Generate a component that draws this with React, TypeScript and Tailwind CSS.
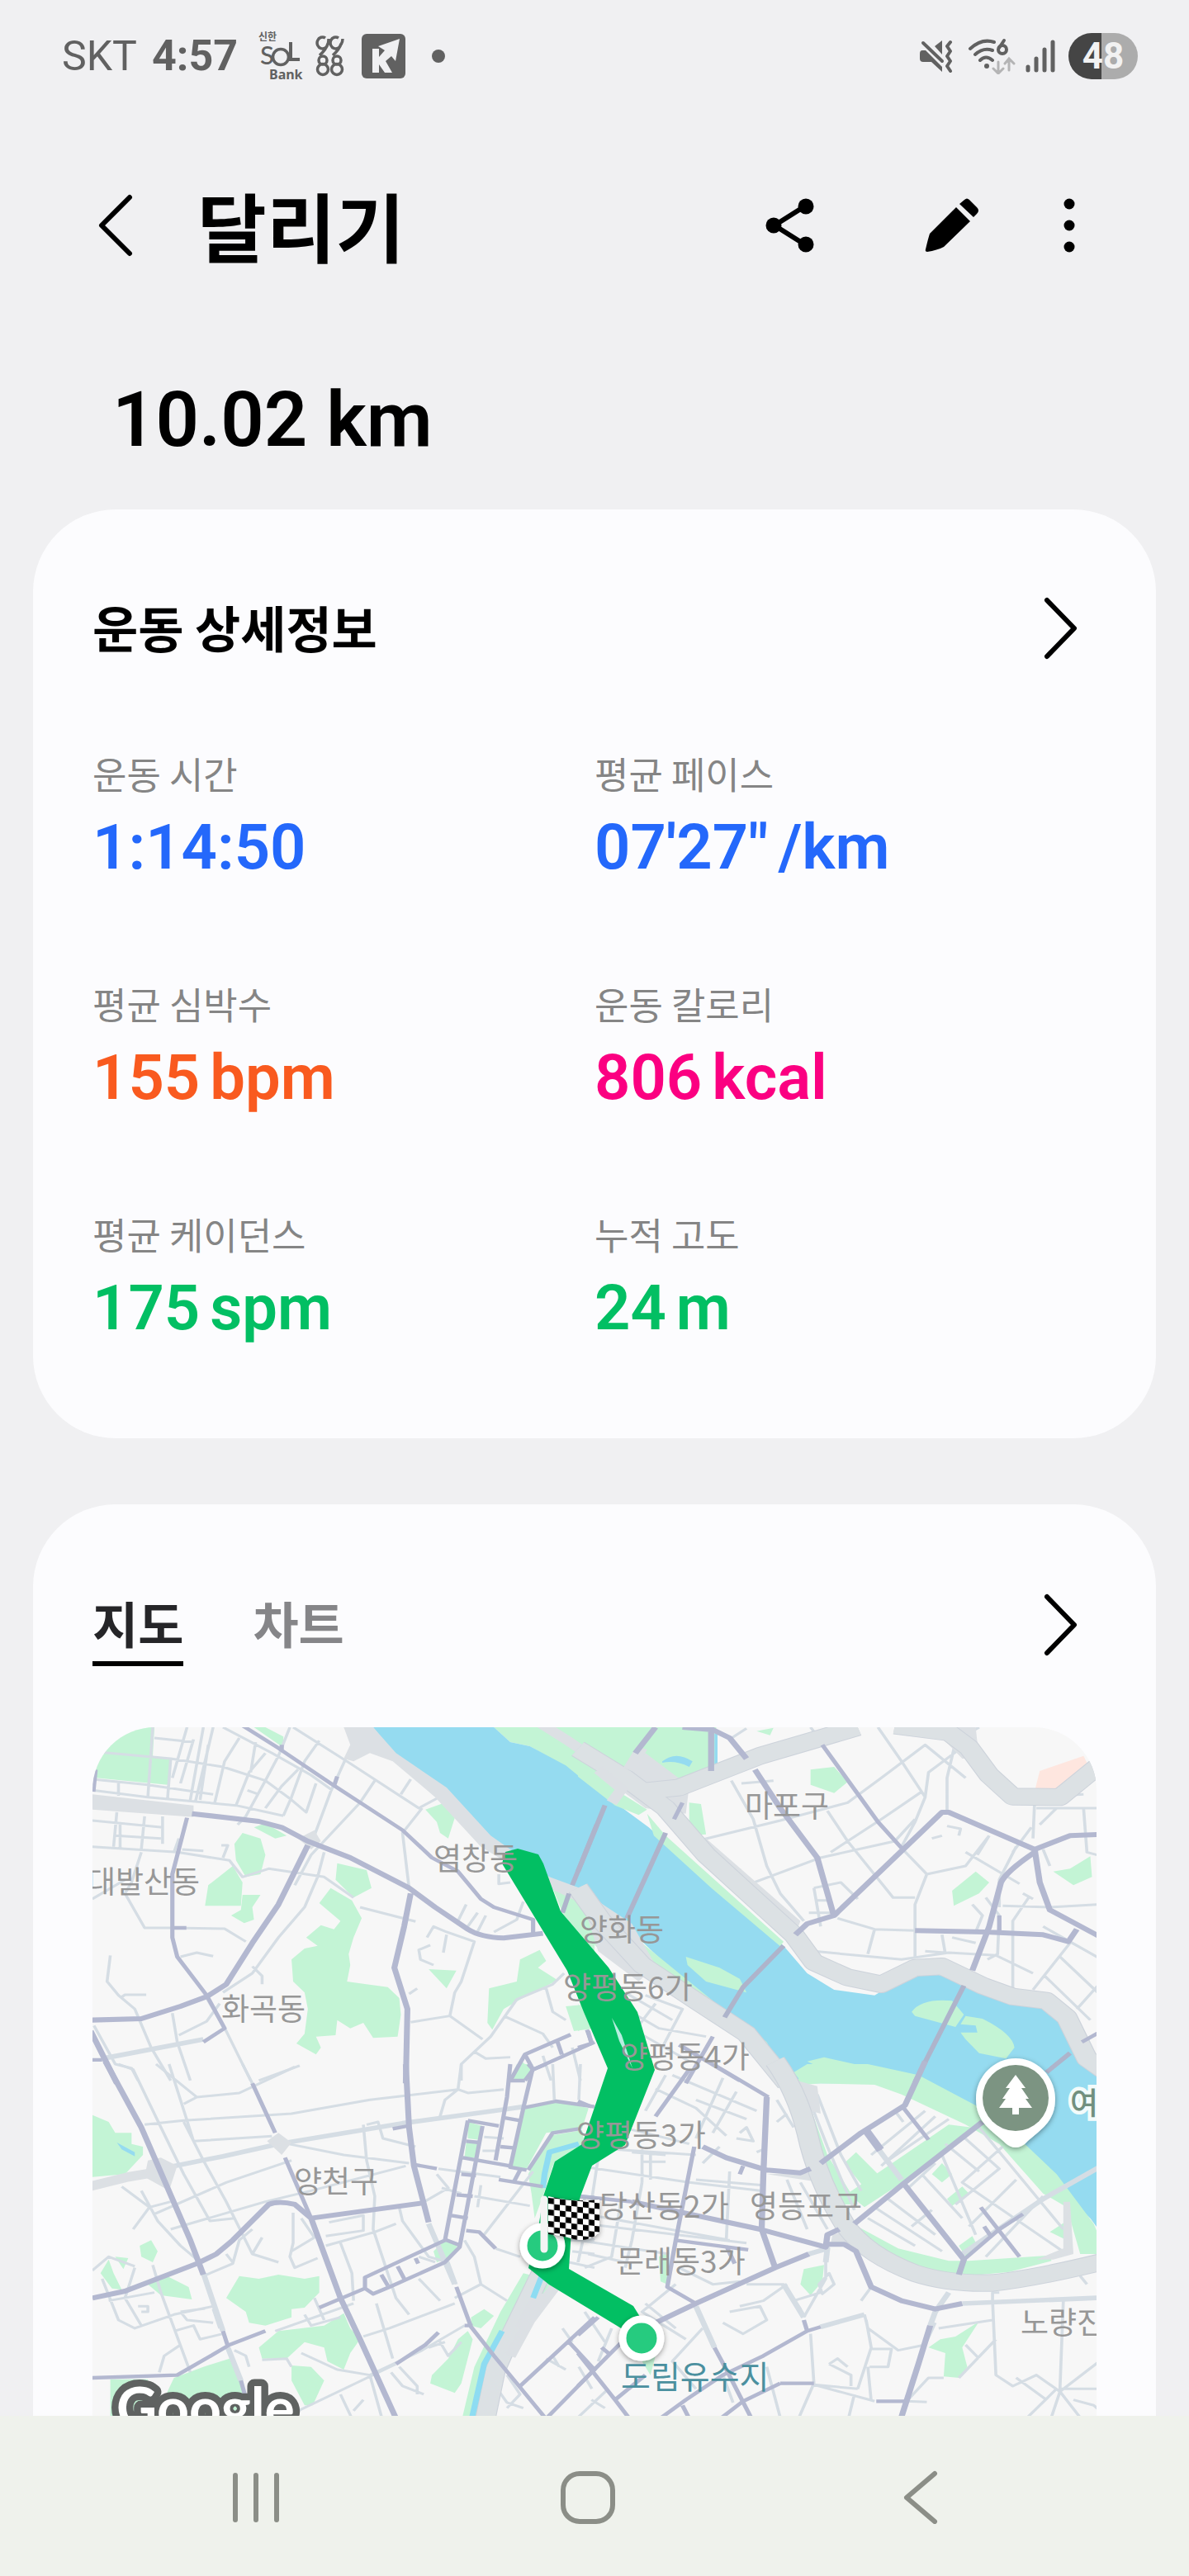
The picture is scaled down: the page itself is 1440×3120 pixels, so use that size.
import React, { useState } from 'react';

interface Stat {
    label: string;
    value: string;
    unit?: string;
    color: string;
}

interface Tile {
    id: string;
    transform: string;
    green: string;
    water: string;
    waterLand?: string;
    blush?: string;
    highwayFill: string;
    highway?: string;
    highwayThin?: string;
    stream?: string;
    streets: string;
    wide?: string;
    roads: string;
    main: string;
    bridges?: string;
}

interface Place {
    name: string;
    x: number;
    y: number;
}

const stats: Stat[] = [
    { label: '운동 시간', value: '1:14:50', color: 'text-[#2468fb]' },
    { label: '평균 페이스', value: '07\'27"', unit: '/km', color: 'text-[#2468fb]' },
    { label: '평균 심박수', value: '155', unit: 'bpm', color: 'text-[#f95a1f]' },
    { label: '운동 칼로리', value: '806', unit: 'kcal', color: 'text-[#fb0081]' },
    { label: '평균 케이던스', value: '175', unit: 'spm', color: 'text-[#02bf63]' },
    { label: '누적 고도', value: '24', unit: 'm', color: 'text-[#02bf63]' },
];

// Each tile is drawn in its own 1568 x 1320 space and scaled onto the map.
const tiles: Tile[] = [
    {
        id: 'nw',
        transform: 'translate(-12 -12) scale(0.3954 0.3333)',
        green: 'M30 36H220L215 140L270 150L260 245L40 220Z M525 36H560L615 70V110Z M525 400L560 385L625 430L590 440Z M490 420L545 440L560 500L545 570L500 580L470 520L465 460Z M460 540L490 600L485 685H375L385 610Z M490 645H545L520 690L525 735L495 748L455 720L485 700Z M780 530L870 555L885 620L830 655L775 590Z M760 620L825 665L855 730L830 800L815 860L820 900L810 960L860 968L935 980L970 1020L975 1080L965 1160L890 1165L860 1110L820 1130L780 1100L775 1155L715 1160L730 1200L715 1225L655 1185L680 1150L690 1060L680 1000L645 960L640 880L680 840L720 830L685 800L730 755L770 770L790 740L725 675Z M1050 335L1110 310L1140 365L1120 440L1095 420L1085 380Z M1060 915L1145 920L1115 985Z M1340 880L1400 845L1420 885L1395 910L1455 955L1340 1025L1290 1060L1255 1135L1240 1110L1245 985L1330 960Z M1480 1050L1568 1040V1130L1505 1140Z M1260 36H1568V270L1480 180L1370 105L1310 90Z M1440 620L1568 700V870L1470 710Z M1320 1320L1340 1245L1375 1280L1355 1320Z',
        water: 'M890 36H1260L1310 90L1370 105L1480 175L1568 260V660L1430 600L1250 450L1100 260L960 140Z',
        highwayFill: 'M800 36H890L960 130L1115 255L1250 430L1430 580L1568 640V700L1430 620L1220 470L1080 290L950 160L880 130L830 160L800 150L820 100Z M30 280L340 320V362L30 335Z M660 440L710 410L730 450L700 480Z',
        highwayThin: 'M1400 20L1480 80L1580 160',
        streets: 'M40 125L270 150L430 180L560 230L640 300L685 345L715 240 M215 36L200 290 M270 150L260 300 M220 75L340 90 M320 36L275 220 M370 36L330 300 M400 36L345 310 M340 80L300 240 M385 100L360 300 M430 36L580 130L700 210L765 265 M480 75L435 160L405 310 M560 130L510 200L470 320 M635 36L600 140L560 230L500 360L475 390 M660 190L610 250L560 330 M725 85L680 160L640 290L615 358 M30 225L200 245L400 280 M30 265L200 290L470 320L615 358 M110 235V285 M645 36L810 160L1030 330L1085 295 M810 140L760 270L710 430 M895 230L850 310L700 500L650 610 M1005 225L975 280 M1040 330L980 420L1000 620 M30 375L245 400 M105 345L95 470 M115 380V475 M190 360L180 480 M245 360V460 M295 440L280 490 M30 470L290 490L450 520L490 580L570 550L740 580L830 655 M100 430L240 440 M180 490L150 600L130 640L190 765H275L435 768L500 815 M305 480L370 485 M425 465H445L430 510 M740 490L720 580L680 690L600 800L520 930L430 1000 M130 590L30 660 M85 865L75 960L110 1010L160 1060L210 1200L270 1320 M195 1008H130L115 1020 M275 1075L290 1180L330 1320 M35 1120L100 1260L150 1275L170 1320 M380 1020L440 1140L515 1320 M665 1266L540 1320 M295 1155L380 1105L420 1040 M300 870L350 855L400 868 M520 905L550 940V970 M850 690L1020 742 M1055 800L1075 760L1115 780L1200 815L1160 960L1140 1000L1125 1085L1225 1170 M1115 790L1105 855 M1065 828L1030 845L1035 880L1075 900 M1005 1108L1125 1085 M1000 1005L1025 985 M1475 930L1440 970L1330 1025L1250 1160L1160 1260V1320 M1420 985L1440 1070L1480 1100 M1290 1085L1410 1150L1440 1200 M1200 1215L1235 1240L1310 1235 M1175 680L1150 740 M1210 710L1180 760 M1235 720L1205 790 M1350 670L1330 735L1260 780 M1275 570V605L1310 600 M1500 1200L1525 1320 M1410 1230L1435 1320 M505 265L540 280 M515 200L530 90',
        wide: 'M70 1238L370 1170',
        roads: 'M320 365L275 570V800L290 870L380 1010L435 1130L370 1180 M30 1245H60 M1495 1153L1355 1225L1310 1320 M1568 1180L1380 1280 M1355 1225L1380 1280L1355 1320 M1545 1135L1560 1185 M1455 1180L1468 1225 M780 215L770 250 M490 30L600 112L760 240L980 410L1070 510L1150 560L1220 660L1260 690L1380 735V790 M610 100V120 M280 765H318 M40 190L33 270',
        main: 'M335 350L540 378L610 400L690 450L820 510L1000 620L1080 690L1180 770Q1220 800 1290 802L1410 785 M30 1100L180 1095L300 1050L380 1015L440 970L520 820L600 680L690 465 M1005 640L985 760L955 910L995 1060L990 1330 M25 1140L105 1330',
        bridges: 'M1575 390L1500 610 M1490 640L1470 710',
    },
    {
        id: 'ne',
        transform: 'translate(588 -12) scale(0.4082 0.3333)',
        green: 'M0 36H410V190L330 230L250 275H190L130 190L0 90Z M690 190L760 180L800 235L760 275L690 245Z M330 310L365 315L380 425L330 430Z M530 50L580 38L570 65Z M1110 630L1180 560L1220 600L1190 640L1115 685Z M1410 560L1460 550L1520 505L1525 580L1470 610Z M0 1040L20 1130L0 1140Z M0 670L60 740L70 850L0 770Z',
        water: 'M0 205L100 300L210 400L440 650L610 830L680 930L760 990L880 1010L960 950L1050 930L1150 960L1290 1030L1380 1050L1440 1120L1510 1290L1568 1330H640L560 1200L350 1000L160 780L20 620L0 560Z M250 160Q290 120 340 160L330 180Q290 155 250 165Z M405 60H414V190H405Z',
        waterLand: 'M0 130L120 270L205 335L180 355L110 320L0 215Z M205 350L260 430L610 815L600 832L400 625L225 430Z M170 800L400 1030L560 1180L590 1250L520 1180L340 1010L210 900Z M320 870L420 910L480 950L500 1000L380 960L325 900Z M990 1070Q1020 1020 1110 1030L1145 1080L1120 1125L1000 1085Z M1150 1085L1200 1095Q1290 1150 1295 1200L1270 1240L1190 1220L1150 1170L1135 1145L1185 1145L1180 1120L1135 1115Z M680 1250L730 1235L1000 1310L1020 1330H640L665 1300L690 1310L730 1280Z',
        blush: 'M1370 195L1500 140L1510 165L1425 268H1355Z',
        highwayFill: 'M0 620L160 750L230 900L180 960L60 850Z M100 240L200 130L330 250L320 350L200 330Z M1050 36H1180L1190 150L1140 150Z M330 440L380 440L660 740L640 800L550 690Z',
        highway: 'M0 115L140 220L260 330L380 500L550 690L640 790L700 890L800 945L900 970L1000 910L1080 905L1200 975L1290 1015L1390 1030L1450 1090L1510 1240L1568 1290 M0 620L70 740L190 900L350 1030L500 1150L620 1330 M180 270L300 255L540 140L830 36 M940 30L1100 55L1160 110L1220 210L1290 288L1430 290L1540 180',
        highwayThin: 'M60 190L130 260L100 310 M150 190L190 110',
        streets: 'M455 230L520 370L560 540L600 640L670 740 M350 450L600 375L800 310L900 220L1030 100L1150 220 M890 36L960 160L1030 290L1000 380L960 470 M1160 90L1040 200L1030 290 M1120 90L1095 220V340 M750 490L900 370L1020 270 M500 610L720 510L940 450L1000 370 M740 340L800 450L935 655H1000 M960 475L1035 570L1150 540L1220 430 M1035 570L1000 680V880 M1150 490L1310 605 M1185 500L1220 430 M700 620L780 600L830 660 M700 620L720 760 M710 665H740 M685 710H760 M770 730L880 770L1000 775 M880 770L860 860 M700 850L960 880L1100 855L1240 865L1350 930 M1350 440L1355 300 M1260 685L1400 690L1540 680 M1340 650L1290 740V990 M1350 990L1460 820 M1380 760L1568 890 M1430 870L1568 1030 M1385 940L1520 1100 M1480 1060L1568 940 M1500 330L1510 490L1540 500 M1360 330H1568 M1350 290L1500 280 M1370 390L1420 330 M485 240L580 230 M1080 790L1090 860 M1110 800L1180 820 M1030 850L1090 855 M1170 680L1200 720L1180 780 M1210 655L1250 720L1245 860L1215 880 M480 550L470 580L650 740 M350 460L490 620L630 740 M200 1010L310 1060L250 1200 M170 1080L240 1130L380 1160 M230 1040L180 1120 M140 1000L280 1100 M90 1100L200 1160L330 1250 M1050 440L1080 430 M1095 395L1135 405L1130 430 M1320 640L1350 660 M1300 470L1250 590V690 M1345 400L1290 490 M1380 480L1400 540 M450 80L500 40 M690 36L705 60 M1150 65L1190 36',
        roads: 'M725 100L890 380L960 475 M285 370L310 310 M1495 1180L1568 1130 M400 1160L320 1330 M300 1190L480 1320 M0 1200L40 1185L30 1140 M1250 720V780',
        main: 'M170 130L230 36 M395 36V195 M310 36L400 45L450 75L500 150 M525 190L600 330L710 510L760 725 M645 790L680 750L760 720L1080 345H1100L1355 480L1460 430L1568 425 M1355 490Q1270 560 1255 600L1220 760L1170 920 M1000 775L1210 780L1380 790L1455 815L1480 770 M1355 480L1370 600L1400 700L1568 810',
        bridges: 'M0 560L80 320 M145 730L260 420 M435 1090L490 980L610 830 M1000 1325L1145 975 M1390 1290L1460 1220',
    },
    {
        id: 'sw',
        transform: 'translate(-12 408) scale(0.3954 0.3333)',
        green: 'M30 185L80 210L100 250H150V290L185 300V330L130 400L30 410Z M175 660L210 640L230 680L215 720L180 700Z M55 760L80 710L95 760L120 820L90 815Z M100 700L140 705L125 745Z M200 800L250 765L325 810L335 855L240 840Z M440 850L480 770L540 780L600 765L680 780L725 770V830L680 885L640 890V920L560 950L510 940L500 900Z M540 1030L600 970L740 950L800 905L820 960L850 1000L820 1050L800 1110L750 1080L740 1030L680 1010L625 1070L550 1070Z M640 1095L700 1100L740 1150L705 1240H680L640 1150Z M240 1240L280 1140L370 1100L450 1070L490 1160L500 1300H240Z M85 1145H200V1300H85Z M1180 210L1225 225L1215 275L1180 270Z M1175 285L1210 290L1205 340H1170Z M1330 0H1380L1350 55H1310Z M1350 165L1450 135L1550 160L1530 235L1420 250L1360 380H1315Z M1365 400L1430 260L1530 240L1540 300L1440 370L1410 480L1385 560L1375 470Z M1075 680L1110 640L1150 655L1130 700L1085 720Z M1190 920L1230 890L1260 915L1220 960L1190 950Z M1180 970L1195 1000L1160 1160L1140 1195L1065 1160L1070 1130L1120 1070L1150 1000Z M1350 760L1280 900L1200 1100L1160 1300H1230L1300 1080L1360 960L1450 790Z',
        water: 'M105 285L160 320V335L120 310Z',
        highwayFill: 'M565 280L600 250L640 285L610 330Z M200 350L240 340L290 370L265 460L190 410Z',
        highway: 'M1405 760L1310 990L1265 1110L1230 1310',
        highwayThin: 'M20 445L140 410L240 390 M1465 780L1370 930L1310 1060 M1340 960L1400 830',
        stream: 'M1285 970L1230 1090L1188 1310 M1410 760L1380 850 M1520 290L1430 320L1415 400L1410 450',
        streets: 'M110 0L155 20L240 230L310 400L390 570L465 560 M225 0L350 120L480 105L650 10 M310 145L350 120 M265 0L340 280L580 262 M190 220L310 205L640 180L880 130L1150 92L1180 105L1290 92 M490 0L520 70 M1160 0L1150 92L1110 130L1095 190 M310 210L370 350L440 500L520 690L600 720 M220 545L440 430L640 350 M270 600L560 500L700 460L990 370 M860 220L870 350L895 480L890 600L960 850L1000 910 M870 220L905 210L920 270L1020 300 M630 290L800 330L1000 360 M180 460L230 570L300 660L360 720 M120 445L205 520L155 600 M205 520L270 500 M645 540V650L635 700L650 740L720 705 M670 560L710 630L640 680 M755 575L860 550V605L745 625 M745 660L895 610L960 580 M790 650L825 760L830 860 M860 990L940 960L1140 870 M970 520L980 570L1060 700L1120 720L1145 800 M900 870L950 1070 M1030 780L1095 860 M370 770L460 725L480 640L520 600 M440 690L460 720 M550 630L520 690 M590 970L830 870 M680 910L700 950L790 920 M710 850L740 930 M60 780L110 930L160 960L280 910L400 880 M160 740L130 850L180 950 M80 860L220 830 M170 880H200V900H180 M215 730L240 830L330 1120 M280 970L340 950L360 1000L430 980 M300 900L375 888 M300 900L320 930L400 940 M300 1020L250 1060L235 1120 M400 890L420 960 M670 1050L780 1110L880 1130L1040 1040L1170 950 M660 1260L960 1090 M790 1200L830 1300 M830 1260L860 1220 M880 1130L920 1300 M945 1120L980 1170L1045 1200 M970 1100L1025 1170V1200 M1090 1000L1120 1060L1160 1010 M1060 1030L1110 1010 M550 1075L625 1070L640 1100 M465 1040L500 1060L510 1100 M1090 380L1280 410 M1085 400L1120 450L1040 505 M1160 470L1100 450 M1230 265L1290 270 M1225 315H1270 M1380 390L1230 620 M1200 480L1370 515 M1170 640L1200 700L1220 800L1300 860 M1220 800L1140 850 M1265 670L1340 700 M1220 440L1210 520 M1440 0L1445 130 M1525 0L1520 130 M1470 960L1500 1010 M1420 1070L1480 1110 M1300 1130L1340 1200L1300 1250 M1500 680L1568 690 M1480 640H1568 M1490 720L1568 740 M1540 480L1510 600L1568 640 M1270 1180L1300 1230L1350 1250 M1440 1060L1460 1100 M1520 1100L1560 1180 M30 750L80 700L160 735 M1080 720L1030 700',
        wide: 'M240 380L430 335L600 290L980 215L1290 165L1350 155 M370 760L430 970 M445 1030L485 1150 M1060 580L1140 800',
        roads: 'M520 70L590 250 M430 970L445 1025 M485 1150L520 1300 M725 885L865 815 M1310 0L1300 120L1265 350 M1380 10L1350 160L1310 375L1360 385 M1420 0L1380 20L1365 0 M1180 205L1110 640L1020 690L865 775V815L890 835L940 810L1110 720L1155 665L1225 225 M1180 205L1275 225 M1175 280L1215 285 M1165 340L1310 370 M1160 400L1205 405 M1145 475L1195 480 M1130 550L1180 560 M1115 640L1160 660 M965 735L985 780 M915 765L935 805 M1020 705L1028 725 M1290 195L1340 205 M1280 300L1325 305 M1310 60H1355 M950 235L995 225 M1345 160L1450 135L1568 155 M1365 385L1440 250L1520 235 M1340 385L1320 430 M1275 420L1410 445 M1175 605L1215 610L1265 670 M1170 950H1195 M960 1090L1050 1020L1090 975 M1145 810L1190 955L1260 1060L1330 1160L1420 1290 M1340 1170L1568 920 M1490 1010L1568 1110L1410 1300 M30 1140L290 1130L400 1055L450 1020L560 970 M620 340L700 560 M1015 365L1085 380 M1520 480L1568 485',
        main: 'M70 -10L180 230L330 640L370 765 M30 850L130 825L350 725L410 690L460 640L570 510Q600 495 650 510L700 560L1040 505 M990 0L1000 230L1015 370L1060 575 M700 560L790 850L850 1000L965 1300',
    },
    {
        id: 'se',
        transform: 'translate(588 408) scale(0.4082 0.3333)',
        green: 'M690 160L740 330L830 510H790L720 380L685 220Z M790 360L825 320L890 400L850 450Z M800 470L1100 220L1170 230L950 440L850 520Z M1050 400L1080 360L1110 400L1080 430Z M1095 490L1140 445L1160 470L1110 515Z M1130 660L1170 625L1185 660L1150 700Z M1400 610L1450 570V640Z M830 590L950 670L1100 715H1160L1400 695L1405 715L1280 755L1150 770L1010 740L880 660Z M670 745L730 730L725 790L690 840L660 800Z M240 700L270 680L265 800L245 790Z M1120 990L1190 935L1140 1030L1155 1100L1130 1140L1085 1135L1090 1050L1040 1030L1075 1000Z M0 150L25 180L0 200Z M190 1080L230 1060L215 1130Z',
        water: 'M620 0H1568V640L1520 560L1400 420L1300 300L1180 170L1000 60L820 20L700 60L640 40Z',
        waterLand: 'M640 30L680 0H860L1010 40L1180 150L1300 260L1420 400L1530 580L1568 690H1490L1450 520L1380 470L1250 290L1150 220L960 110L880 75L720 70L670 75Z',
        highwayFill: 'M650 60L710 80L720 180L690 170L660 110Z M1440 500H1460L1470 690L1410 710L1360 710L1440 670Z M560 400L700 395L720 430L640 415Z M755 620L790 610L820 670L750 650Z',
        highway: 'M585 -10Q650 100 680 250Q710 420 790 580Q850 690 1000 760Q1100 800 1230 795Q1350 780 1568 715',
        streets: 'M230 90L350 160L440 260 M260 40L200 170 M280 40L530 170 M430 50L350 270 M470 100L400 250 M350 130L500 200 M590 130L640 230 M590 210L620 180 M480 250L500 230L520 280L470 270 M160 320L260 330 M190 310V430 M215 320V420 M190 355H260 M0 370L330 430L540 460 M0 540L450 640 M20 580L500 650 M60 340L40 500L0 720 M130 480L100 700L20 740 M30 690L140 720 M190 430L160 640L140 740 M450 390L440 640 M620 420L680 600 M660 430L740 600 M350 420L550 440 M130 230L200 250L330 290 M110 310L350 330 M370 360L420 300 M530 320L550 310 M0 640L270 690 M300 740L400 800L480 790 M500 800H610L660 890 M610 800L640 860L720 830 M735 680V780L670 920 M480 880L550 860L620 800 M450 900L540 880L560 930L490 980L430 940 M745 760L760 800L725 835L715 800Z M850 910L860 960L950 1040L1030 1020L1060 940 M870 810L840 860 M855 930L870 1030L830 1180 M870 1035H930L920 1100H865 M830 1180L700 1165L880 1225 M745 1090L810 1130V1170 M745 1090L770 1070L800 1100 M690 980L700 1160L650 1300 M1230 860L1240 1130L1290 1170L1360 1130L1430 1190L1400 1300 M1440 860L1430 1180H1568 M1420 1180L1320 1300 M1568 1060L1430 1190L1500 1300 M1070 960L1230 930 M1240 1000L1130 1140 M1150 1020L1190 1070 M1300 1140L1390 1220 M1230 860V830H1250 M820 1200L800 1300 M860 1100L870 1225 M1085 1140L1040 1140L975 1225L1035 1228 M290 800L190 900L320 1000 M200 870L290 960 M370 960L280 1080L350 1180 M430 1130L460 1230 M560 1100L600 1284 M1060 190L900 370 M1030 170L870 330 M920 350L1100 200 M1090 290L1190 390 M1140 260L1250 380L1120 510 M1020 400L1140 560 M1300 420L1160 590 M1380 480L1210 700 M1260 300L1140 430L1450 690 M1080 330L1180 620 M860 560L1000 660 M880 520L1080 680 M920 490L1060 620 M1060 360L980 450 M990 590L1050 530 M1190 230L1440 600 M680 110L740 300L820 530 M710 110L780 330L840 460 M940 170L965 210 M1470 1220L1530 1240L1568 1280 M1490 770L1510 800 M0 1284L90 1180 M40 1220L80 1250 M20 900L80 1010 M100 960L60 1080',
        wide: 'M1140 870L1568 848 M1100 830L1060 900L1045 950 M850 910L720 955 M895 315L960 420 M1575 355L1380 490L1140 690 M685 690L740 670L735 720 M350 880L405 1030 M610 800L670 920',
        roads: 'M960 150L1040 275 M1205 590L1225 625 M1195 520L1310 700 M0 135L40 155 M400 0L565 120 M330 20L230 190 M290 640L505 675 M670 930L680 970 M405 1030L440 1110L520 1300 M885 1225H975 M600 1160H700 M600 1160L490 1225L410 1300 M0 1050L110 1220L160 1300 M0 1170L130 1010 M110 1220L200 1130 M310 1240L335 1300 M0 985L60 920 M480 400L490 370 M440 660L465 725 M345 300L290 640L265 810L350 870 M70 1030L90 1050 M1145 710L1250 600L1320 545 M720 955L680 970L550 1060L430 1130L320 1220L230 1300 M0 480L160 500',
        main: 'M720 360L840 250L970 150L1030 -10 M820 580L970 430L1200 210 M970 440L1145 710L1130 765 M370 300L440 340L560 385L660 395L690 380 M560 120L550 400L545 600L585 740 M230 940L350 870L585 740L685 690 M160 500L540 600L735 665L740 620L775 600 M740 655H790L825 680L870 810L960 860L1060 890L1140 870 M1045 950L1010 1090L955 1300 M850 240L895 315 M855 235L900 310',
    },
];

const places: Place[] = [
    { name: '대발산동', x: -6, y: 201 },
    { name: '염창동', x: 413, y: 173 },
    { name: '마포구', x: 790, y: 109 },
    { name: '양화동', x: 590, y: 259 },
    { name: '화곡동', x: 156, y: 355 },
    { name: '양평동6가', x: 570, y: 329 },
    { name: '양평동4가', x: 639, y: 413 },
    { name: '양평동3가', x: 586, y: 508 },
    { name: '양천구', x: 244, y: 564 },
    { name: '당산동2가', x: 614, y: 594 },
    { name: '영등포구', x: 796, y: 594 },
    { name: '문래동3가', x: 634, y: 661 },
    { name: '노량진', x: 1124, y: 735 },
];

function StatusBar() {
    return (
        <div className="flex h-[136px] items-center justify-between pl-[75px] pr-[62px] text-[#616161]">
            <div className="flex items-center font-['Roboto','Noto_Sans_CJK_KR',sans-serif]">
                <span className="text-[50px] leading-none">SKT</span>
                <span className="ml-[18px] text-[52px] leading-none font-bold">4:57</span>
                <svg className="ml-6 h-[64px] w-[56px]" viewBox="0 -4 56 64" fill="currentColor" role="img" aria-label="신한 SOL Bank">
                    <text x="1" y="9" fontSize="12" fontWeight="700" fontFamily="Noto Sans CJK KR">신한</text>
                    <text x="3" y="38" fontSize="31" fontWeight="500" fontFamily="Lato">S</text>
                    <circle cx="28" cy="29" r="9.5" fill="none" stroke="currentColor" strokeWidth="3.5" />
                    <path d="M40 11V32H51" fill="none" stroke="currentColor" strokeWidth="4" />
                    <text x="14" y="56" fontSize="16" fontWeight="700" fontFamily="Noto Sans">Bank</text>
                </svg>
                <svg className="ml-[14px] h-[52px] w-[36px]" viewBox="0 0 36 52" fill="none" stroke="currentColor" strokeWidth="3.5" role="img" aria-label="9988">
                    <path d="M12 4A6.500 7 0 1 0 15 11Q13 18 5 25M16 5Q16 9 15 12M28 4A6.500 7 0 1 0 31 11Q29 18 21 25M33 5Q33 9 31 12" />
                    <circle cx="9" cy="31" r="5" />
                    <circle cx="26" cy="31" r="5" />
                    <circle cx="9" cy="42" r="6.5" />
                    <circle cx="26" cy="42" r="6.5" />
                </svg>
                <svg className="ml-[20px] h-[54px] w-[53px]" viewBox="0 0 53 54" role="img" aria-label="K">
                    <rect width="53" height="54" rx="6" fill="currentColor" />
                    <path d="M13 18H21V28L28 20L20 15L46 6L41 33L36 27L29 33L37 47H28L21 37V47H13Z" fill="#f0f0f2" />
                </svg>
                <span className="ml-8 size-4 rounded-full bg-[#616161]" />
            </div>
            <div className="flex items-center">
                <svg className="h-10 w-10" viewBox="0 0 40 40" fill="currentColor" role="img" aria-label="진동">
                    <path d="M3 13H7L27 33V39L14 27H4Q0 27 0 23V17Q0 13 3 13ZM27 1V18L18 8Z" />
                    <path d="M10 16L27 33V24L4 1" fill="none" />
                    <path d="M7 3L28 24" stroke="#f0f0f2" strokeWidth="4" />
                    <path d="M4 4L27 26" stroke="currentColor" strokeWidth="4" strokeLinecap="round" />
                    <path d="M37 3L33 8L37 14L33 20L37 26L33 32L37 38" fill="none" stroke="currentColor" strokeWidth="4" strokeLinecap="round" strokeLinejoin="round" />
                </svg>
                <svg className="ml-[18px] h-[44px] w-[60px]" viewBox="0 0 60 44" fill="none" strokeLinecap="round" role="img" aria-label="Wi-Fi 6">
                    <path d="M3 13Q17 0 32 5M9 20Q19 11 30 15M15 27Q22 20 30 27" stroke="currentColor" strokeWidth="4" />
                    <circle cx="23" cy="34" r="3" fill="currentColor" />
                    <path d="M44 3L38 12" stroke="currentColor" strokeWidth="4" />
                    <circle cx="42" cy="14" r="5" stroke="currentColor" strokeWidth="4" />
                    <path d="M37 29V42M31 37L37 43L43 37M50 39V25M45 31L50 25L56 31" stroke="#b4b4b5" strokeWidth="3" />
                </svg>
                <svg className="ml-[10px] h-10 w-9" viewBox="0 0 36 40" stroke="currentColor" strokeWidth="5" strokeLinecap="round" role="img" aria-label="신호">
                    <path d="M3 33V37M13 23V37M23 12V37M33 3V37" />
                </svg>
                <div className="ml-4 flex h-14 w-[84px] items-center justify-center rounded-full bg-linear-to-r from-[#454545] from-48% to-[#acacac] to-48% font-['Roboto',sans-serif] text-[44px] leading-none font-bold text-[#f2f2f2]">
                    48
                </div>
            </div>
        </div>
    );
}

function Header() {
    return (
        <header className="flex h-[274px] items-center justify-between pr-[138px] pl-[119px]">
            <div className="flex items-center">
                <button type="button" aria-label="뒤로">
                    <svg className="h-[76px] w-[42px]" viewBox="0 0 42 76" fill="none" stroke="#000" strokeWidth="6" strokeLinecap="round" strokeLinejoin="round">
                        <path d="M38 4L4 38L38 72" />
                    </svg>
                </button>
                <h1 className="ml-[78px] pb-1 text-[91px] leading-none font-bold text-black">달리기</h1>
            </div>
            <div className="flex items-center">
                <button type="button" aria-label="공유">
                    <svg className="h-[66px] w-[60px]" viewBox="0 0 60 66">
                        <path d="M49 9L11 33L49 57" fill="none" stroke="#000" strokeWidth="6" />
                        <circle cx="49" cy="10" r="9.5" />
                        <circle cx="10" cy="33" r="9.5" />
                        <circle cx="49" cy="56" r="9.5" />
                    </svg>
                </button>
                <button type="button" aria-label="편집" className="ml-[133px]">
                    <svg className="h-[66px] w-[66px]" viewBox="0 0 66 66">
                        <path d="M38 11L55 28L23 59Q15 63 3 65Q0 65 1 62Q4 49 6 43Z" />
                        <path d="M42 7L48 2Q51 -1 54 2L63 11Q67 15 63 19L59 23Z" />
                    </svg>
                </button>
                <button type="button" aria-label="더보기" className="ml-[102px]">
                    <svg className="h-[66px] w-[14px]" viewBox="0 0 14 66">
                        <circle cx="7" cy="7" r="6.5" />
                        <circle cx="7" cy="33" r="6.5" />
                        <circle cx="7" cy="59" r="6.5" />
                    </svg>
                </button>
            </div>
        </header>
    );
}

function MoreButton({ label }: { label: string }) {
    return (
        <button type="button" aria-label={label} className="mr-6">
            <svg className="h-[76px] w-[40px]" viewBox="0 0 40 76" fill="none" stroke="#000" strokeWidth="6" strokeLinecap="round" strokeLinejoin="round">
                <path d="M4 4L37 38L4 72" />
            </svg>
        </button>
    );
}

function RouteMap() {
    return (
        <svg className="block h-auto w-full" viewBox="0 0 1216 834" role="img" aria-label="달리기 경로">
            <defs>
                <pattern id="checks" width="14" height="14" patternUnits="userSpaceOnUse" patternTransform="translate(552 570) skewY(6)">
                    <rect width="14" height="14" fill="#fff" />
                    <path d="M0 0H7V14H14V7H0Z" fill="#000" />
                </pattern>
                <filter id="shadow" x="-30%" y="-30%" width="160%" height="160%">
                    <feDropShadow dx="0" dy="2" stdDeviation="3" floodOpacity="0.4" />
                </filter>
            </defs>
            <rect width="1216" height="834" fill="#f7f7f7" />

            {tiles.map((tile) => (
                <g key={tile.id} transform={tile.transform}>
                    <path d={tile.green} fill="#c3f4d5" />
                    <path d={tile.water} fill="#95dbf0" />
                    {tile.waterLand && <path d={tile.waterLand} fill="#c3f4d5" />}
                    {tile.blush && <path d={tile.blush} fill="#fee6df" />}
                </g>
            ))}
            {tiles.map((tile) => (
                <g key={tile.id} transform={tile.transform} fill="none" strokeLinejoin="round">
                    <path d={tile.streets} stroke="#d5dde4" strokeWidth="9" />
                    {tile.wide && <path d={tile.wide} stroke="#d5dde4" strokeWidth="17" />}
                    <path d={tile.highwayFill} fill="#dce0e4" />
                    {tile.highway && <path d={tile.highway} stroke="#cdd3db" strokeWidth="64" />}
                    {tile.highway && <path d={tile.highway} stroke="#dce1e4" strokeWidth="58" />}
                    {tile.highwayThin && <path d={tile.highwayThin} stroke="#dce0e4" strokeWidth="34" />}
                    {tile.stream && <path d={tile.stream} stroke="#8edcf2" strokeWidth="18" />}
                </g>
            ))}
            {tiles.map((tile) => (
                <g key={tile.id} transform={tile.transform} fill="none" stroke="#b3b8d0" strokeLinejoin="round">
                    <path d={tile.roads} strokeWidth="13" />
                    <path d={tile.main} strokeWidth="18" />
                    {tile.bridges && <path d={tile.bridges} stroke="#aeb4cb" strokeWidth="15" />}
                </g>
            ))}

            {/* recorded route */}
            <path
                d="M496 165L500 151L515 147L540 154L546 165L567 223L625 291L660 345L681 415L645 506L605 531L591 568L580 610L577 656L655 701L668 722L660 740L637 726L553 675L528 655L541 600L546 568L560 526L593 505L624 413L595 345L575 295Z"
                fill="#02bf63"
            />
            <path d="M629 352L641 373L654 413L638 380Z" fill="#b5eee0" />

            {/* start */}
            <circle cx="665" cy="740" r="23" fill="#25cb7f" stroke="#fff" strokeWidth="9" filter="url(#shadow)" />

            {/* finish */}
            <circle cx="545" cy="628" r="23" fill="#25cb7f" stroke="#fff" strokeWidth="9" filter="url(#shadow)" />
            <path d="M552 568Q583 576 614 572V612Q600 624 583 620Q567 615 552 614Z" fill="url(#checks)" filter="url(#shadow)" />
            <path d="M547 572V632" stroke="#f4f4f4" strokeWidth="9" strokeLinecap="round" />

            <g fontFamily="Noto Sans CJK KR, sans-serif" fontSize="37" fill="#979797">
                {places.map((place) => (
                    <text key={place.name} x={place.x} y={place.y}>
                        {place.name}
                    </text>
                ))}
                <text x="640" y="801" fontSize="39" fill="#4b909f">도림유수지</text>
                <text x="1184" y="469" fill="#71907f" stroke="#f3fbfb" strokeWidth="9" paintOrder="stroke" fontWeight="500">여</text>
            </g>

            {/* park pin */}
            <path
                d="M1118 401C1092 401 1070 423 1070 450C1070 480 1090 488 1106 504Q1118 514 1130 504C1146 488 1166 480 1166 450C1166 423 1144 401 1118 401Z"
                fill="#fff"
                filter="url(#shadow)"
            />
            <circle cx="1118" cy="449" r="40" fill="#7c9482" />
            <path d="M1118 421L1130 437H1125L1134 450H1130L1138 461H1122V469H1114V461H1098L1106 450H1102L1111 437H1106Z" fill="#fff" />

            <text x="29" y="849" fontFamily="Lato, sans-serif" fontSize="68" fontWeight="700" fill="#fff" stroke="#5f6261" strokeWidth="17" strokeLinejoin="round" paintOrder="stroke">
                Google
            </text>
        </svg>
    );
}

function NavigationBar() {
    return (
        <nav className="grid h-[194px] grid-cols-3 items-center justify-items-center bg-[#eff2ec] pr-[124px] pl-[109px] text-[#8b8e87]">
            <button type="button" aria-label="최근 앱">
                <svg className="h-[68px] w-14" viewBox="0 0 56 68" stroke="currentColor" strokeWidth="6" strokeLinecap="round">
                    <path d="M3 9V63M28 9V63M53 9V63" />
                </svg>
            </button>
            <button type="button" aria-label="홈">
                <svg className="h-[68px] w-[66px]" viewBox="0 0 66 68" fill="none" stroke="currentColor" strokeWidth="6">
                    <rect x="3" y="7" width="60" height="58" rx="20" />
                </svg>
            </button>
            <button type="button" aria-label="뒤로 가기">
                <svg className="h-[68px] w-[42px]" viewBox="0 0 42 68" fill="none" stroke="currentColor" strokeWidth="6" strokeLinecap="round" strokeLinejoin="round">
                    <path d="M38 7L4 36L38 65" />
                </svg>
            </button>
        </nav>
    );
}

export default function App() {
    const [tab, setTab] = useState<'map' | 'chart'>('map');

    return (
        <div className="flex min-h-screen flex-col bg-[#f0f0f2] font-['Noto_Sans_CJK_KR',sans-serif]">
            <StatusBar />
            <Header />

            <main className="flex flex-1 flex-col px-10">
                <p className="pt-[53px] pb-[62px] pl-[96px] font-['Roboto',sans-serif] text-[92px] leading-none font-semibold text-black">
                    10.02 km
                </p>

                <section className="rounded-[100px] bg-[#fcfcfe] px-[72px] pt-[104px] pb-[119px]">
                    <div className="flex h-20 items-center justify-between">
                        <h2 className="pb-1 text-[60px] leading-none font-bold text-black">운동 상세정보</h2>
                        <MoreButton label="운동 상세정보 보기" />
                    </div>
                    <dl className="mt-[110px] grid grid-cols-2 gap-y-[125px]">
                        {stats.map((stat) => (
                            <div key={stat.label}>
                                <dt className="text-[45px] leading-[52px] text-[#858585]">{stat.label}</dt>
                                <dd className={`mt-6 flex gap-3 font-['Roboto',sans-serif] text-[76px] leading-[78px] font-semibold ${stat.color}`}>
                                    <span>{stat.value}</span>
                                    {stat.unit && <span>{stat.unit}</span>}
                                </dd>
                            </div>
                        ))}
                    </dl>
                </section>

                <section className="mt-20 flex-1 rounded-t-[100px] bg-[#fcfcfe] px-[72px] pt-24">
                    <div className="flex items-center justify-between">
                        <div role="tablist" className="flex gap-[84px] text-[60px] leading-none font-bold">
                            <button
                                type="button"
                                role="tab"
                                aria-selected={tab === 'map'}
                                onClick={() => setTab('map')}
                                className={`h-[100px] border-b-6 ${tab === 'map' ? 'border-black text-[#252528]' : 'border-transparent text-[#858588]'}`}
                            >
                                지도
                            </button>
                            <button
                                type="button"
                                role="tab"
                                aria-selected={tab === 'chart'}
                                onClick={() => setTab('chart')}
                                className={`h-[100px] border-b-6 ${tab === 'chart' ? 'border-black text-[#252528]' : 'border-transparent text-[#858588]'}`}
                            >
                                차트
                            </button>
                        </div>
                        <MoreButton label="지도 보기" />
                    </div>
                    <div className="mt-[74px] overflow-hidden rounded-t-[76px]">
                        <RouteMap />
                    </div>
                </section>
            </main>

            <NavigationBar />
        </div>
    );
}
